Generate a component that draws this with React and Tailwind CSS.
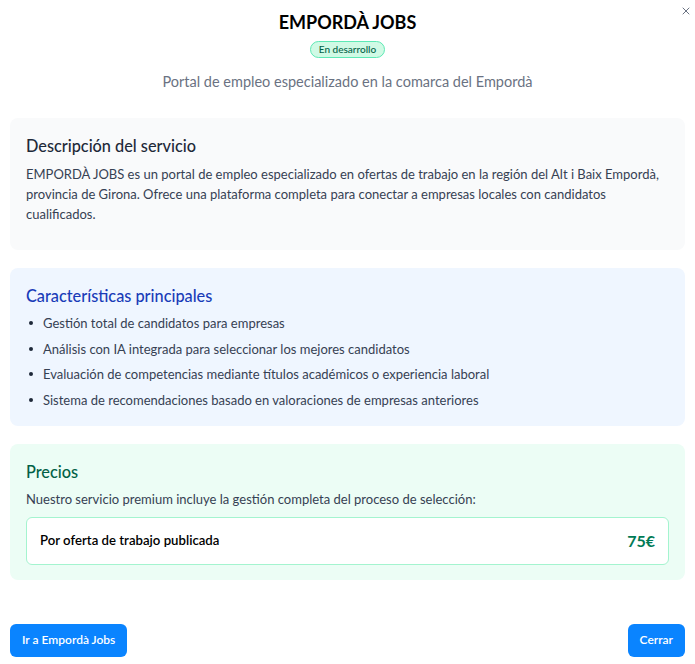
import { X } from "lucide-react";

export default function App() {
  const features = [
    "Gestión total de candidatos para empresas",
    "Análisis con IA integrada para seleccionar los mejores candidatos",
    "Evaluación de competencias mediante títulos académicos o experiencia laboral",
    "Sistema de recomendaciones basado en valoraciones de empresas anteriores",
  ];

  return (
    <div className="relative min-h-screen bg-white font-['Lato',sans-serif] text-gray-900">
      {/* Close */}
      <button className="absolute top-[5px] right-[3px] text-gray-500">
        <X size={12} strokeWidth={2} />
      </button>

      <div className="px-[10px] pt-[10px]">
        {/* Header */}
        <div className="flex flex-col items-center">
          <h1 className="text-[18px] leading-[24px] font-bold text-black">EMPORDÀ JOBS</h1>
          <span className="mt-[7px] rounded-full border border-emerald-300 bg-emerald-100 px-[8px] text-[10px] leading-[15px] font-medium text-emerald-800">
            En desarrollo
          </span>
          <p className="mt-[14px] text-[14.5px] leading-[20px] text-gray-500">
            Portal de empleo especializado en la comarca del Empordà
          </p>
        </div>

        {/* Descripción */}
        <div className="mt-[26px] rounded-lg bg-gray-50 px-4 pt-4 pb-[26px]">
          <h2 className="text-[16.3px] leading-[24px] font-medium text-gray-800">Descripción del servicio</h2>
          <p className="mt-[6px] text-[13px] leading-[20px] text-gray-700">
            EMPORDÀ JOBS es un portal de empleo especializado en ofertas de trabajo en la región del Alt i Baix Empordà,
            provincia de Girona. Ofrece una plataforma completa para conectar a empresas locales con candidatos
            cualificados.
          </p>
        </div>

        {/* Características */}
        <div className="mt-[18px] rounded-lg bg-blue-50 px-4 pt-4 pb-4">
          <h2 className="text-[16.3px] leading-[24px] font-medium text-blue-800">Características principales</h2>
          <ul className="mt-[5px] flex flex-col gap-[5.5px]">
            {features.map((f) => (
              <li key={f} className="flex items-center text-[13px] leading-[20px] text-gray-700">
                <span className="mr-[10px] ml-[3px] h-[4px] w-[4px] rounded-full bg-gray-800"></span>
                {f}
              </li>
            ))}
          </ul>
        </div>

        {/* Precios */}
        <div className="mt-[18px] rounded-lg bg-emerald-50 px-4 pt-4 pb-[15px]">
          <h2 className="text-[16.3px] leading-[24px] font-medium text-emerald-800">Precios</h2>
          <p className="mt-[5px] text-[13px] leading-[20px] text-gray-700">
            Nuestro servicio premium incluye la gestión completa del proceso de selección:
          </p>
          <div className="mt-[8px] flex h-[48px] items-center justify-between rounded-md border border-emerald-200 bg-white pr-[13px] pl-[13px]">
            <span className="text-[13.2px] font-semibold text-black">Por oferta de trabajo publicada</span>
            <span className="text-[16px] font-bold text-emerald-700">75€</span>
          </div>
        </div>

        {/* Footer */}
        <div className="mt-[44px] flex items-center justify-between">
          <button className="h-[33px] rounded-md bg-[#0a84ff] px-[12px] text-[12px] font-semibold text-white">
            Ir a Empordà Jobs
          </button>
          <button className="h-[33px] rounded-md bg-[#0a84ff] px-[12px] text-[12px] font-semibold text-white">
            Cerrar
          </button>
        </div>
      </div>
    </div>
  );
}
